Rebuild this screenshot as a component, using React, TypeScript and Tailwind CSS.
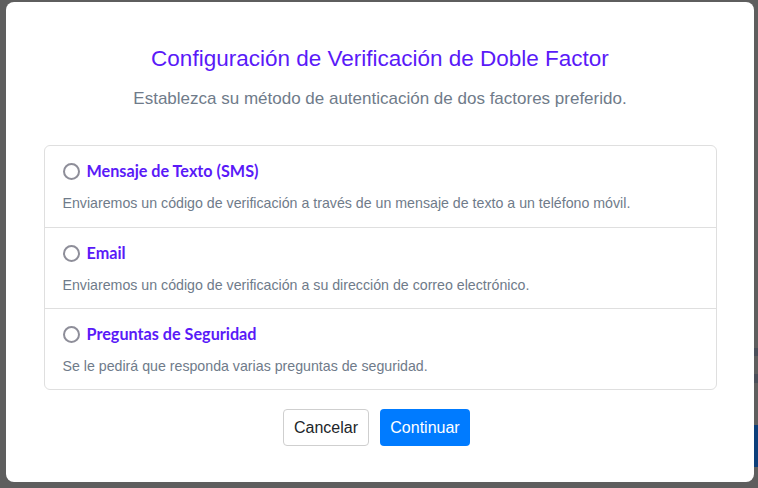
import React, { useState } from 'react';

interface Method {
  id: string;
  label: string;
  description: string;
}

const methods: Method[] = [
  {
    id: 'sms',
    label: 'Mensaje de Texto (SMS)',
    description: 'Enviaremos un código de verificación a través de un mensaje de texto a un teléfono móvil.',
  },
  {
    id: 'email',
    label: 'Email',
    description: 'Enviaremos un código de verificación a su dirección de correo electrónico.',
  },
  {
    id: 'questions',
    label: 'Preguntas de Seguridad',
    description: 'Se le pedirá que responda varias preguntas de seguridad.',
  },
];

const App: React.FC = () => {
  const [selected, setSelected] = useState<string | null>(null);

  return (
    <div className="relative h-[488px] w-[758px] overflow-hidden bg-[#5e5e5e] [font-family:'Liberation_Sans',Arial,sans-serif]">
      {/* Page behind the backdrop, peeking out on the right */}
      <div className="absolute right-0 top-[348px] h-[8px] w-[4px] bg-[#4a4f5a]"></div>
      <div className="absolute right-0 top-[374px] h-[9px] w-[4px] bg-[#4a4f5a]"></div>
      <div className="absolute right-0 top-[425px] h-[42px] w-[4px] bg-[#0d3f7a]"></div>

      {/* Modal */}
      <div className="absolute left-[6px] top-[2px] flex h-[480px] w-[748px] flex-col items-center rounded-[8px] bg-white">
        <h2 className="mt-[42px] text-[22.5px] leading-[30px] text-[#5a1af8]">
          Configuración de Verificación de Doble Factor
        </h2>
        <p className="mt-[13px] text-[17px] leading-[24px] text-[#6f7b8a]">
          Establezca su método de autenticación de dos factores preferido.
        </p>

        <div className="mt-[34px] w-[673px] rounded-[6px] border border-[#dfdfdf]">
          {methods.map((m, i) => (
            <div
              key={m.id}
              onClick={() => setSelected(m.id)}
              className={`flex h-[81px] cursor-pointer flex-col px-[18px] pt-[14px] ${i > 0 ? 'border-t border-[#dfdfdf]' : ''}`}
            >
              <div className="flex items-center gap-[7px]">
                <span className="flex h-[17px] w-[17px] items-center justify-center rounded-full border-2 border-[#8e8e99]">
                  {selected === m.id && <span className="h-[7px] w-[7px] rounded-full bg-[#5a1af8]"></span>}
                </span>
                <span className="[font-family:'Lato',sans-serif] text-[16.2px] font-bold leading-[22px] text-[#5a1af8]">
                  {m.label}
                </span>
              </div>
              <p className="mt-[11px] text-[14.2px] leading-[20px] text-[#6f7b8a]">{m.description}</p>
            </div>
          ))}
        </div>

        <div className="mr-[7px] mt-[19px] flex gap-[11px]">
          <button className="h-[37px] w-[86px] rounded-[4px] border border-[#cfcfcf] bg-white text-[16px] text-[#212529]">
            Cancelar
          </button>
          <button className="h-[37px] w-[90px] rounded-[4px] bg-[#007bff] text-[16px] text-white">
            Continuar
          </button>
        </div>
      </div>
    </div>
  );
};

export default App;
